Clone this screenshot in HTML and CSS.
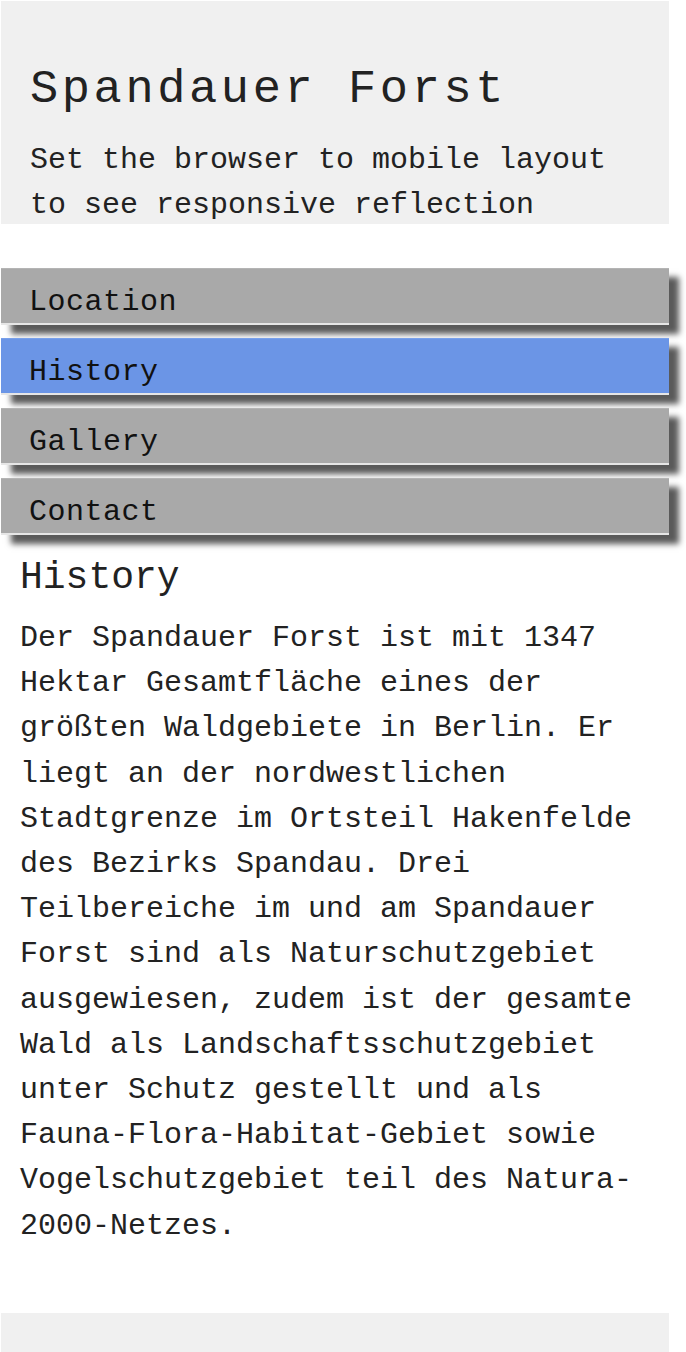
FILE: index.html
```html
<!DOCTYPE html>
<html lang="de">
<head>
<meta charset="utf-8">
<title>Spandauer Forst</title>
<link rel="stylesheet" href="styles.css">
</head>
<body>
<div class="page">
  <header class="header">
    <h1 class="title">Spandauer Forst</h1>
    <p class="subtitle">Set the browser to mobile layout to see responsive reflection</p>
  </header>
  <nav class="menu">
    <a class="menu-item" href="#">Location</a>
    <a class="menu-item active" href="#">History</a>
    <a class="menu-item" href="#">Gallery</a>
    <a class="menu-item" href="#">Contact</a>
  </nav>
  <main class="content">
    <h2 class="content-title">History</h2>
    <p class="content-text">Der Spandauer Forst ist mit 1347 Hektar Gesamtfläche eines der größten Waldgebiete in Berlin. Er liegt an der nordwestlichen Stadtgrenze im Ortsteil Hakenfelde des Bezirks Spandau. Drei Teilbereiche im und am Spandauer Forst sind als Naturschutzgebiet ausgewiesen, zudem ist der gesamte Wald als Landschaftsschutzgebiet unter Schutz gestellt und als Fauna-Flora-Habitat-Gebiet sowie Vogelschutzgebiet teil des Natura-2000-Netzes.</p>
  </main>
  <footer class="footer"></footer>
</div>
</body>
</html>
```
FILE: styles.css
```css
html, body {
  margin: 0;
  padding: 0;
  background: #ffffff;
  overflow: hidden;
}

body {
  font-family: "Courier New", "Liberation Mono", monospace;
  color: #222222;
}

.page {
  width: 668px;
  margin-left: 1px;
  padding-top: 1px;
}

.header {
  background: #f0f0f0;
  padding: 61px 29px 0 29px;
  height: 162px;
}

.title {
  margin: 0;
  font-size: 47px;
  line-height: 56px;
  letter-spacing: 3.6px;
  font-weight: normal;
}

.subtitle {
  margin: 20px 0 0 0;
  font-size: 30px;
  line-height: 45px;
}

.menu {
  display: flex;
  flex-direction: column;
  gap: 13px;
  margin-top: 44px;
}

.menu-item {
  display: block;
  background: #a9a9a9;
  color: #111111;
  text-decoration: none;
  font-size: 30px;
  line-height: 34px;
  letter-spacing: 0.5px;
  padding: 16px 28px 4px 28px;
  border-top: 1px solid #b4b4b4;
  border-bottom: 2px solid #e6e6e6;
  box-shadow: 10px 9px 6px #5a5a5a;
}

.menu-item.active {
  background: #6b95e6;
  border-top-color: #78a0ea;
}

.content {
  padding: 21px 20px 0 19px;
}

.content-title {
  margin: 0;
  font-size: 38px;
  line-height: 44px;
  font-weight: normal;
}

.content-text {
  margin: 16px 0 0 0;
  font-size: 30px;
  line-height: 45.2px;
}

.footer {
  margin-top: 64px;
  height: 39px;
  background: #f0f0f0;
}
```
